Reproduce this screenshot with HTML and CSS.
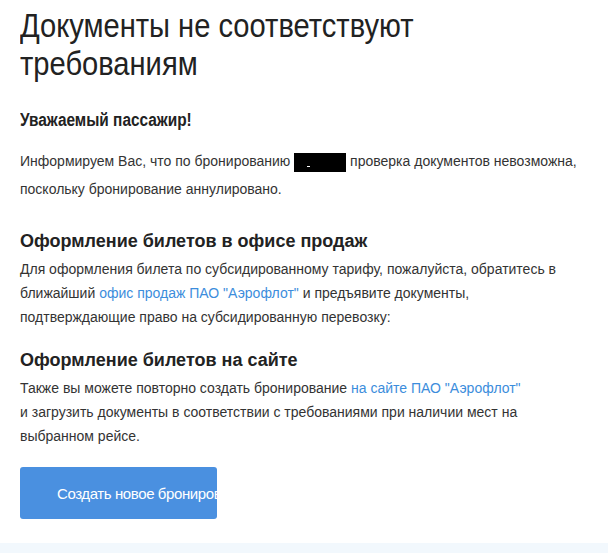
FILE: index.html
```html
<!DOCTYPE html>
<html lang="ru">
<head>
    <meta charset="UTF-8">
    <meta name="viewport" content="width=device-width, initial-scale=1.0">
    <title>Документы не соответствуют требованиям</title>
    <link rel="stylesheet" href="styles.css">
</head>
<body>
    <div class="content">
        <h1 class="title">Документы не соответствуют требованиям</h1>
        <h2 class="greeting">Уважаемый пассажир!</h2>
        <p class="intro">Информируем Вас, что по бронированию <span class="hidden-code"><span class="dash"></span></span> проверка документов невозможна, поскольку бронирование аннулировано.</p>

        <h3 class="section-title">Оформление билетов в офисе продаж</h3>
        <p class="text">Для оформления билета по субсидированному тарифу, пожалуйста, обратитесь в ближайший <a href="#">офис продаж ПАО "Аэрофлот"</a> и предъявите документы, подтверждающие право на субсидированную перевозку:</p>

        <h3 class="section-title second">Оформление билетов на сайте</h3>
        <p class="text">Также вы можете повторно создать бронирование <a href="#">на сайте ПАО "Аэрофлот"</a><br>и загрузить документы в соответствии с требованиями при наличии мест на выбранном рейсе.</p>

        <button class="new-booking">Создать новое бронирование</button>
    </div>
    <div class="footer-band"></div>
</body>
</html>
```

FILE: styles.css
```css
body {
    margin: 0;
    padding: 0;
    font-family: "Liberation Sans", Arial, sans-serif;
    color: #333;
    background: #fff;
}
.content {
    padding: 0 20px;
    width: 560px;
}
/* header font in the mockup is a narrow grotesque */
.title {
    margin: 6px 0 0 0;
    font-size: 34px;
    font-weight: normal;
    line-height: 38px;
    color: #222;
    transform: scaleX(0.856);
    transform-origin: left top;
}
.greeting {
    margin: 26px 0 0 0;
    font-size: 18px;
    line-height: 24px;
    color: #222;
    transform: scaleX(0.855);
    transform-origin: left top;
}
.intro {
    margin: 15px 0 0 0;
    font-size: 14px;
    line-height: 28px;
}
.hidden-code {
    display: inline-block;
    width: 52px;
    height: 19px;
    background: #000;
    vertical-align: -6px;
    position: relative;
}
.hidden-code .dash {
    position: absolute;
    left: 13px;
    top: 13px;
    width: 3px;
    height: 1px;
    background: #fff;
}
.section-title {
    margin: 26px 0 0 0;
    font-size: 18px;
    line-height: 24px;
    color: #222;
}
.section-title.second {
    margin-top: 19px;
}
.text {
    margin: 4px 0 0 0;
    font-size: 14px;
    line-height: 24px;
}
.text a {
    color: #3c8ddc;
    text-decoration: none;
}
.new-booking {
    display: block;
    margin-top: 19px;
    width: 197px;
    height: 52px;
    padding: 0 0 0 37px;
    border: none;
    border-radius: 3px;
    background: #4a90e0;
    color: #fff;
    font-family: "Liberation Sans", Arial, sans-serif;
    font-size: 15px;
    letter-spacing: -0.4px;
    text-align: left;
    white-space: nowrap;
    overflow: hidden;
    cursor: pointer;
}
.footer-band {
    margin-top: 24px;
    height: 10px;
    background: #f2f8fd;
}
```
